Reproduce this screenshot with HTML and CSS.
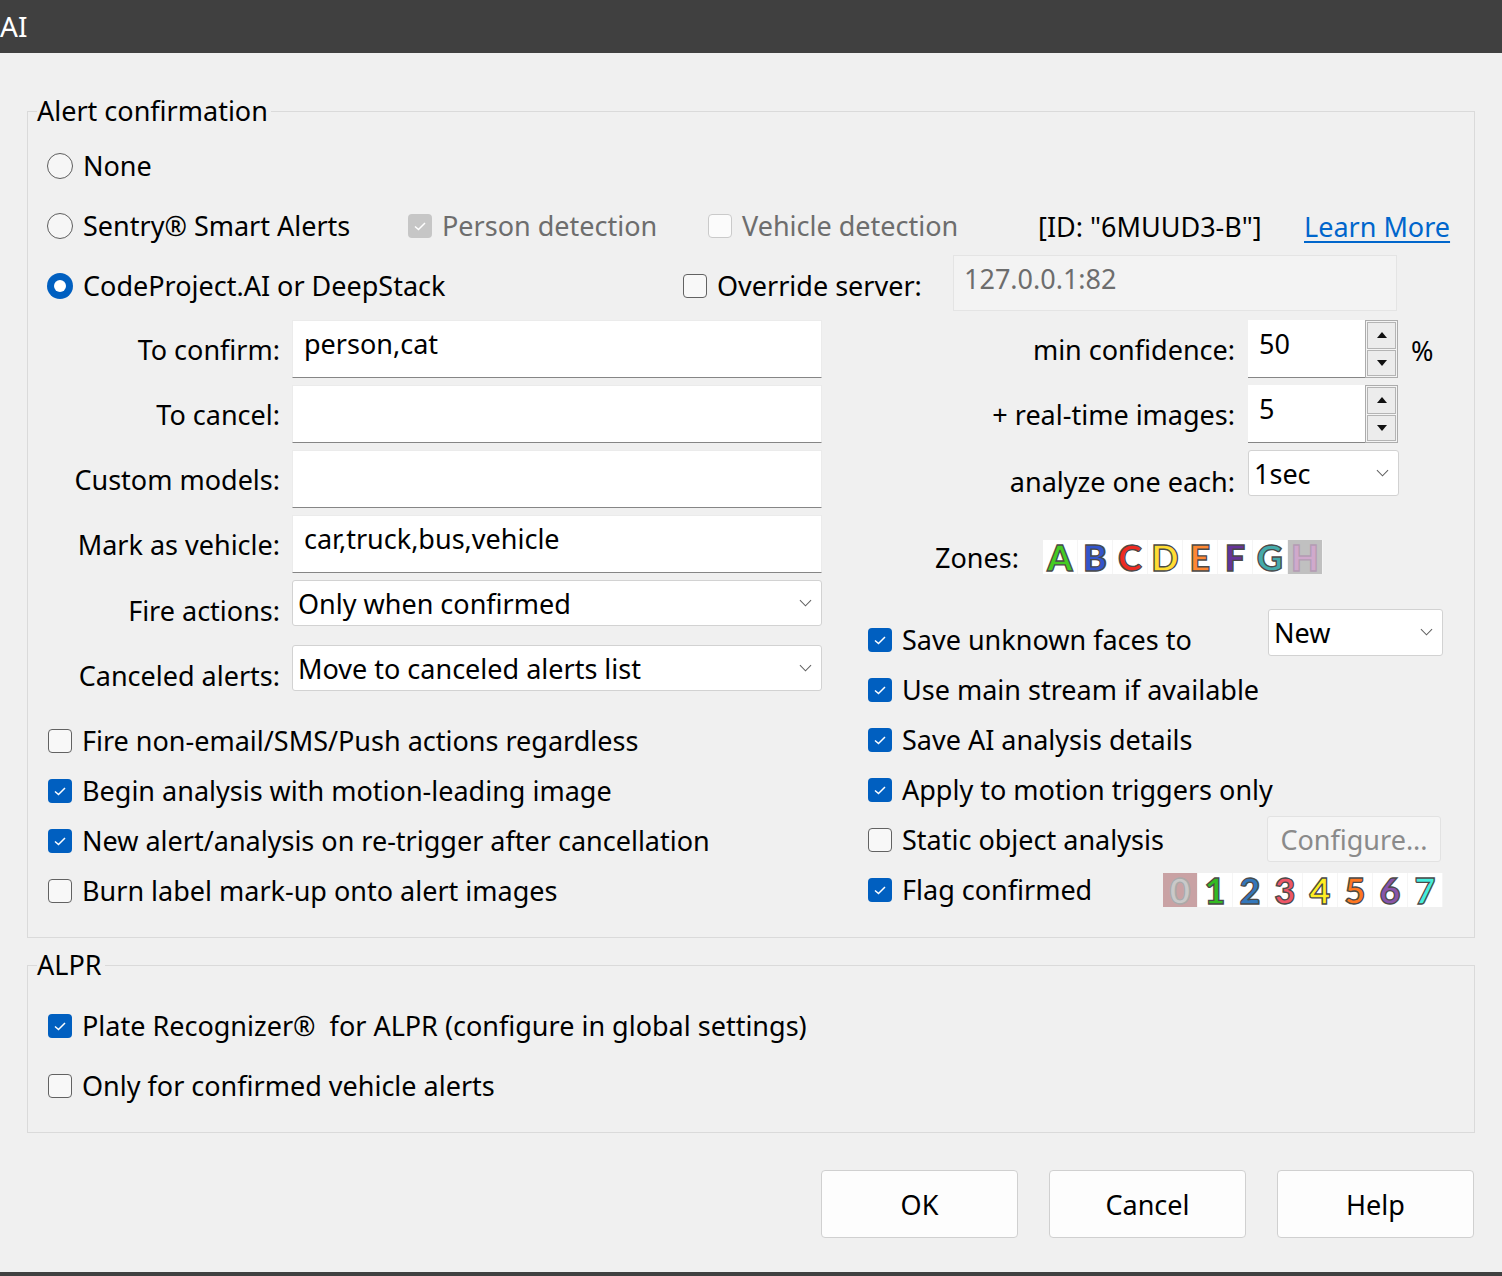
FILE: index.html
```html
<!DOCTYPE html>
<html>
<head>
<meta charset="utf-8">
<title>AI</title>
<link rel="stylesheet" href="styles.css">
</head>
<body>
<div class="titlebar">AI</div>
<main class="dialog">
  <fieldset class="group">
    <legend>Alert confirmation</legend>
    <div class="gbody alert-body">
      <div class="row">
        <label class="opt"><span class="radio"></span>None</label>
      </div>
      <div class="row">
        <label class="opt w-sentry"><span class="radio"></span>Sentry®&nbsp;Smart Alerts</label>
        <label class="opt w-person dis"><span class="check checked dis"><svg viewBox="0 0 24 24"><path d="M7 12.5 L10.5 15.5 L17 9" /></svg></span>Person detection</label>
        <label class="opt w-vehicle dis"><span class="check dis"></span>Vehicle detection</label>
        <span class="w-id">[ID: "6MUUD3-B"]</span>
        <a class="link" href="#">Learn More</a>
      </div>
      <div class="row">
        <label class="opt w-cp"><span class="radio on"></span>CodeProject.AI or DeepStack</label>
        <label class="opt w-override"><span class="check"></span>Override server:</label>
        <div class="server">127.0.0.1:82</div>
      </div>
      <div class="cols">
        <div class="col-left">
          <div class="frow"><span class="flabel">To confirm:</span><div class="tfield">person,cat</div></div>
          <div class="frow"><span class="flabel">To cancel:</span><div class="tfield"></div></div>
          <div class="frow"><span class="flabel">Custom models:</span><div class="tfield"></div></div>
          <div class="frow"><span class="flabel">Mark as vehicle:</span><div class="tfield">car,truck,bus,vehicle</div></div>
          <div class="frow srow"><span class="flabel low">Fire actions:</span><div class="select wide">Only when confirmed<svg class="chev" viewBox="0 0 14 8"><path d="M1 1 L7 7 L13 1"/></svg></div></div>
          <div class="frow srow srow2"><span class="flabel low">Canceled alerts:</span><div class="select wide">Move to canceled alerts list<svg class="chev" viewBox="0 0 14 8"><path d="M1 1 L7 7 L13 1"/></svg></div></div>
          <div class="checks">
            <label class="opt crow"><span class="check"></span>Fire non-email/SMS/Push actions regardless</label>
            <label class="opt crow"><span class="check checked"><svg viewBox="0 0 24 24"><path d="M7 12.5 L10.5 15.5 L17 9" /></svg></span>Begin analysis with motion-leading image</label>
            <label class="opt crow"><span class="check checked"><svg viewBox="0 0 24 24"><path d="M7 12.5 L10.5 15.5 L17 9" /></svg></span>New alert/analysis on re-trigger after cancellation</label>
            <label class="opt crow"><span class="check"></span>Burn label mark-up onto alert images</label>
          </div>
        </div>
        <div class="col-right">
          <div class="frow"><span class="rlabel">min confidence:</span><div class="spin"><span class="spin-val">50</span><span class="spin-btns"><span class="sbtn"><svg viewBox="0 0 10 6"><path d="M0 6 L5 0 L10 6Z"/></svg></span><span class="sbtn"><svg viewBox="0 0 10 6"><path d="M0 0 L5 6 L10 0Z"/></svg></span></span></div><span class="unit">%</span></div>
          <div class="frow"><span class="rlabel">+ real-time images:</span><div class="spin"><span class="spin-val">5</span><span class="spin-btns"><span class="sbtn"><svg viewBox="0 0 10 6"><path d="M0 6 L5 0 L10 6Z"/></svg></span><span class="sbtn"><svg viewBox="0 0 10 6"><path d="M0 0 L5 6 L10 0Z"/></svg></span></span></div></div>
          <div class="frow srow"><span class="rlabel low2">analyze one each:</span><div class="select small">1sec<svg class="chev" viewBox="0 0 14 8"><path d="M1 1 L7 7 L13 1"/></svg></div></div>
          <div class="zones-row">
            <span class="zlabel">Zones:</span>
            <div class="strip">
              <span class="cell z-a">A</span><span class="cell z-b">B</span><span class="cell z-c">C</span><span class="cell z-d">D</span><span class="cell z-e">E</span><span class="cell z-f">F</span><span class="cell z-g">G</span><span class="cell z-h off">H</span>
            </div>
          </div>
          <div class="rchecks">
            <div class="rcrow">
              <label class="opt"><span class="check checked"><svg viewBox="0 0 24 24"><path d="M7 12.5 L10.5 15.5 L17 9" /></svg></span>Save unknown faces to</label>
              <div class="select faces">New<svg class="chev" viewBox="0 0 14 8"><path d="M1 1 L7 7 L13 1"/></svg></div>
            </div>
            <div class="rcrow">
              <label class="opt"><span class="check checked"><svg viewBox="0 0 24 24"><path d="M7 12.5 L10.5 15.5 L17 9" /></svg></span>Use main stream if available</label>
            </div>
            <div class="rcrow">
              <label class="opt"><span class="check checked"><svg viewBox="0 0 24 24"><path d="M7 12.5 L10.5 15.5 L17 9" /></svg></span>Save AI analysis details</label>
            </div>
            <div class="rcrow">
              <label class="opt"><span class="check checked"><svg viewBox="0 0 24 24"><path d="M7 12.5 L10.5 15.5 L17 9" /></svg></span>Apply to motion triggers only</label>
            </div>
            <div class="rcrow">
              <label class="opt"><span class="check"></span>Static object analysis</label>
              <div class="configure">Configure...</div>
            </div>
            <div class="rcrow">
              <label class="opt"><span class="check checked"><svg viewBox="0 0 24 24"><path d="M7 12.5 L10.5 15.5 L17 9" /></svg></span>Flag confirmed</label>
              <div class="strip digits">
                <span class="cell n-0 off">0</span><span class="cell n-1">1</span><span class="cell n-2">2</span><span class="cell n-3">3</span><span class="cell n-4">4</span><span class="cell n-5">5</span><span class="cell n-6">6</span><span class="cell n-7">7</span>
              </div>
            </div>
          </div>
        </div>
      </div>
    </div>
  </fieldset>

  <fieldset class="group alpr">
    <legend>ALPR</legend>
    <div class="gbody alpr-body">
      <div class="row">
        <label class="opt"><span class="check checked"><svg viewBox="0 0 24 24"><path d="M7 12.5 L10.5 15.5 L17 9" /></svg></span>Plate Recognizer®&nbsp; for ALPR (configure in global settings)</label>
      </div>
      <div class="row">
        <label class="opt"><span class="check"></span>Only for confirmed vehicle alerts</label>
      </div>
    </div>
  </fieldset>

  <div class="buttons">
    <button class="btn">OK</button>
    <button class="btn">Cancel</button>
    <button class="btn">Help</button>
  </div>
</main>
<div class="bottombar"></div>
</body>
</html>
```

FILE: styles.css
```css
* { box-sizing: border-box; }

body {
  margin: 0;
  width: 1502px;
  height: 1276px;
  overflow: hidden;
  background: #f0f0f0;
  color: #000;
  font-family: "Noto Sans", "Open Sans", sans-serif;
  font-size: 27px;
  display: flex;
  flex-direction: column;
}

.titlebar {
  height: 53px;
  flex: none;
  background: #404040;
  color: #fff;
  font-size: 28px;
  line-height: 53px;
  padding-left: 0;
}

.dialog {
  padding: 43px 27px 0 27px;
}

.group {
  margin: 0;
  min-width: 0;
  border: 1px solid #dadada;
  padding: 0 0 21px 9px;
}

.group legend {
  padding: 0 3px 0 0;
  line-height: 30px;
  font-size: 27px;
}

.gbody {
  padding-left: 11px;
}

.alert-body { padding-top: 10px; }

.row {
  height: 60px;
  display: flex;
  align-items: center;
}

.opt {
  display: flex;
  align-items: center;
  white-space: nowrap;
  line-height: 32px;
}

.opt.dis { color: #6d6d6d; }

.radio {
  width: 26px;
  height: 26px;
  margin-left: -1px;
  margin-right: 10px;
  border-radius: 50%;
  border: 1.5px solid #5e5e5e;
  background: #f6f6f6;
  flex: none;
  display: flex;
  align-items: center;
  justify-content: center;
}

.radio.on {
  border: none;
  background: #005fc0;
}

.radio.on::after {
  content: "";
  width: 12px;
  height: 12px;
  border-radius: 50%;
  background: #fff;
}

.check {
  width: 24px;
  height: 24px;
  margin-right: 10px;
  border-radius: 4px;
  border: 1.5px solid #626262;
  background: #f8f8f8;
  flex: none;
  display: flex;
  align-items: center;
  justify-content: center;
}

.check svg {
  width: 24px;
  height: 24px;
  fill: none;
  stroke: #fff;
  stroke-width: 1.5;
}

.check.checked {
  border: none;
  background: #005fc0;
}

.check.dis {
  border-color: #cacaca;
  background: #fbfbfb;
}

.check.checked.dis {
  background: #c6c6c6;
}

.w-sentry { width: 360px; }
.w-person { width: 300px; }
.w-vehicle { width: 330px; }
.w-id { width: 266px; white-space: nowrap; }
.w-cp { width: 635px; }
.w-override { width: 270px; }

.link {
  color: #0066cc;
  text-decoration: underline;
  text-underline-offset: 4px;
  text-decoration-thickness: 2px;
}

.server {
  width: 444px;
  height: 56px;
  margin-top: -6px;
  background: #f3f3f3;
  border: 1px solid #e4e4e4;
  color: #6d6d6d;
  padding: 5px 0 0 10px;
  line-height: 36px;
}

.cols {
  display: flex;
  padding-top: 4px;
}

.col-left {
  width: 774px;
  flex: none;
  display: flex;
  flex-direction: column;
  gap: 7px;
}

.col-right {
  flex: 1;
  display: flex;
  flex-direction: column;
  gap: 7px;
}

.frow {
  height: 58px;
  display: flex;
  align-items: center;
}

.frow.srow { height: 46px; }
.frow.srow2 { margin-top: 12px; }

.flabel {
  width: 232px;
  flex: none;
  text-align: right;
  margin-right: 12px;
  white-space: nowrap;
}

.flabel.low { padding-top: 14px; }

.rlabel {
  width: 413px;
  flex: none;
  text-align: right;
  margin-right: 13px;
  white-space: nowrap;
}

.rlabel.low2 { padding-top: 16px; }

.tfield {
  width: 530px;
  height: 58px;
  background: #fff;
  border: 1px solid #ebebeb;
  border-bottom: 1.5px solid #868686;
  padding: 0 0 12px 11px;
  display: flex;
  align-items: center;
}

.select {
  height: 46px;
  background: #fff;
  border: 1px solid #d2d2d2;
  border-radius: 3px;
  display: flex;
  align-items: center;
  padding: 0 0 0 5px;
  position: relative;
}

.select.wide { width: 531px; }
.select.small { width: 151px; padding-left: 5px; padding-bottom: 0; }

.chev {
  width: 13px;
  height: 8px;
  margin-left: auto;
  margin-right: 9px;
  fill: none;
  stroke: #606060;
  stroke-width: 1.1;
}

.spin {
  width: 150px;
  height: 58px;
  display: flex;
}

.spin-val {
  flex: 1;
  background: #fff;
  border-bottom: 1.5px solid #868686;
  padding: 0 0 10px 11px;
  display: flex;
  align-items: center;
}

.spin-btns {
  width: 33px;
  flex: none;
  border: 1px solid #acacac;
  display: flex;
  flex-direction: column;
  padding: 1px;
  gap: 1px;
  background: #f4f4f4;
}

.sbtn {
  flex: 1;
  background: #ececec;
  border: 1px solid #b4b4b4;
  display: flex;
  align-items: center;
  justify-content: center;
}

.sbtn svg {
  width: 10px;
  height: 6px;
  fill: #111;
}

.unit {
  margin-left: 13px;
  padding-top: 2px;
}

.zones-row {
  margin-top: 37px;
  height: 34px;
  display: flex;
  align-items: center;
  padding-left: 113px;
}

.zlabel { margin-right: 24px; }

.strip {
  display: flex;
  background: #fff;
  height: 34px;
}

.cell {
  width: 35px;
  height: 34px;
  display: flex;
  align-items: center;
  justify-content: center;
  font-family: "Lato", "DejaVu Sans", sans-serif;
  font-weight: 900;
  font-size: 36px;
  line-height: 34px;
  -webkit-text-stroke: 1.3px #4a4a4a;
  border-right: 1px solid #f5f5f5;
}

.z-a { color: #44cc22; }
.z-b { color: #3355cc; }
.z-c { color: #ee2a22; }
.z-d { color: #ffdd33; }
.z-e { color: #ff8833; }
.z-f { color: #663399; }
.z-g { color: #44aaaa; }
.z-h { color: #d0a9cc; background: #c0c0c0; -webkit-text-stroke-color: #b49db4; }

.n-0 { color: #c9c9c9; background: #c9a2a4; -webkit-text-stroke-color: #aaaaaa; }
.n-1 { color: #33bb22; }
.n-2 { color: #3377bb; }
.n-3 { color: #ee5566; }
.n-4 { color: #ffee22; }
.n-5 { color: #ff7722; }
.n-6 { color: #8855aa; }
.n-7 { color: #44eedd; }

.rchecks {
  margin-top: 34px;
  display: flex;
  flex-direction: column;
}

.rcrow {
  height: 50px;
  display: flex;
  align-items: center;
  padding-left: 46px;
  padding-right: 31px;
}

.rcrow .opt { margin-right: auto; }

.select.faces {
  width: 175px;
  height: 47px;
  margin-bottom: 16px;
  padding-left: 5px;
  padding-bottom: 0;
}

.configure {
  width: 174px;
  height: 46px;
  margin-right: 2px;
  margin-bottom: 2px;
  border: 1px solid #e2e2e2;
  border-radius: 3px;
  background: #f5f5f5;
  color: #8a8a8a;
  display: flex;
  align-items: center;
  justify-content: center;
}

.checks {
  margin-top: 18px;
  display: flex;
  flex-direction: column;
}

.crow { height: 50px; }

.alpr { margin-top: 12px; padding-bottom: 16px; }
.alpr-body { padding-top: 16px; }

.buttons {
  margin-top: 37px;
  display: flex;
  justify-content: flex-end;
  gap: 31px;
  padding-right: 1px;
}

.btn {
  width: 197px;
  height: 68px;
  background: #fdfdfd;
  border: 1px solid #d0d0d0;
  border-radius: 4px;
  font-family: inherit;
  font-size: 27px;
  color: #000;
  padding: 0;
}

.bottombar {
  margin-top: auto;
  height: 4px;
  flex: none;
  background: #404040;
}
```
